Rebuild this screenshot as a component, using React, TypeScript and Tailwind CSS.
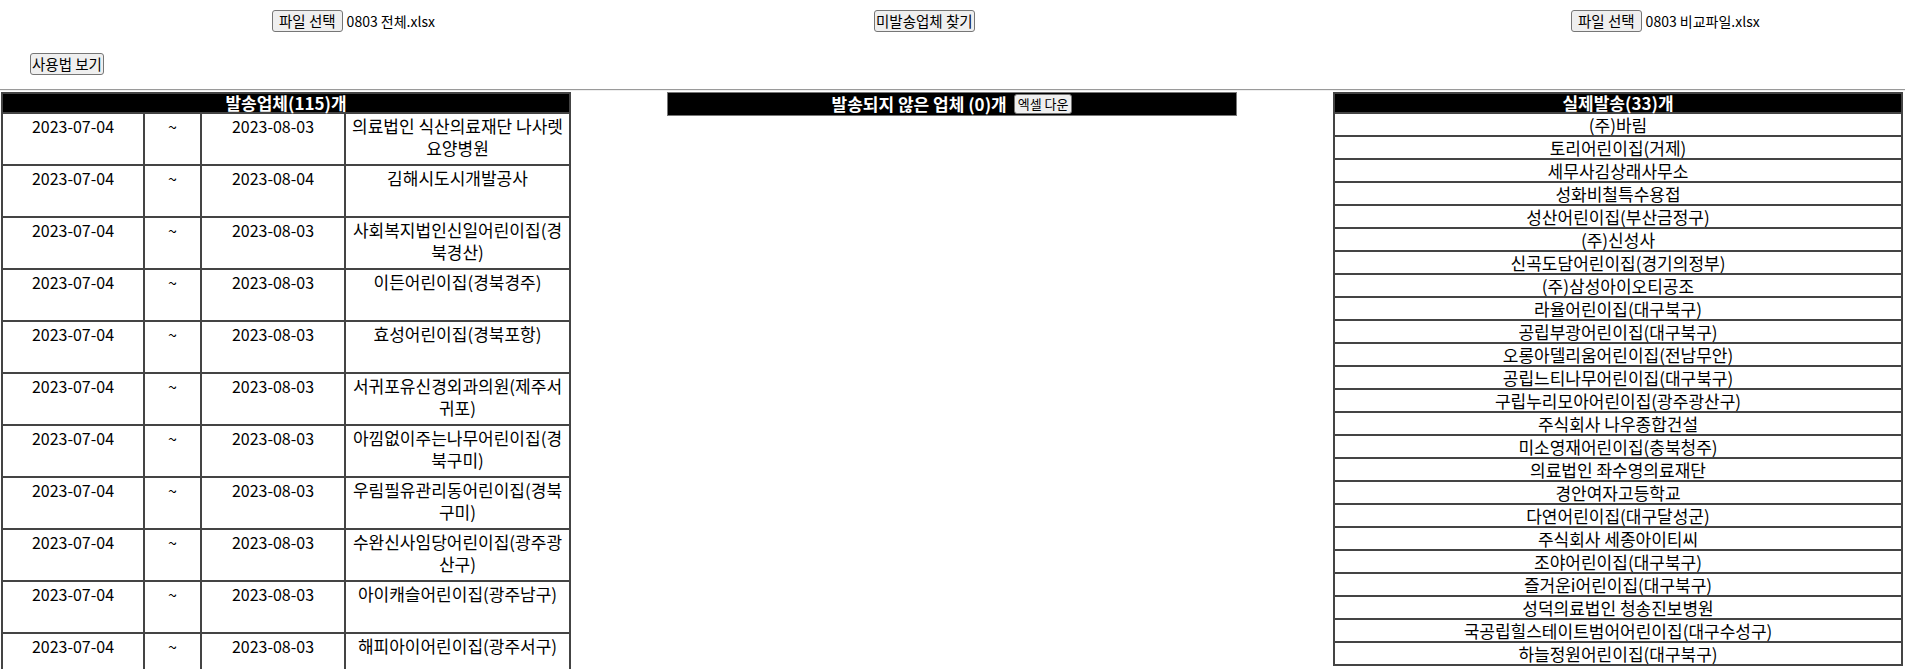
const sent = [
  { from: '2023-07-04', to: '2023-08-03', name: '의료법인 식산의료재단 나사렛 요양병원' },
  { from: '2023-07-04', to: '2023-08-04', name: '김해시도시개발공사' },
  { from: '2023-07-04', to: '2023-08-03', name: '사회복지법인신일어린이집(경북경산)' },
  { from: '2023-07-04', to: '2023-08-03', name: '이든어린이집(경북경주)' },
  { from: '2023-07-04', to: '2023-08-03', name: '효성어린이집(경북포항)' },
  { from: '2023-07-04', to: '2023-08-03', name: '서귀포유신경외과의원(제주서귀포)' },
  { from: '2023-07-04', to: '2023-08-03', name: '아낌없이주는나무어린이집(경북구미)' },
  { from: '2023-07-04', to: '2023-08-03', name: '우림필유관리동어린이집(경북구미)' },
  { from: '2023-07-04', to: '2023-08-03', name: '수완신사임당어린이집(광주광산구)' },
  { from: '2023-07-04', to: '2023-08-03', name: '아이캐슬어린이집(광주남구)' },
  { from: '2023-07-04', to: '2023-08-03', name: '해피아이어린이집(광주서구)' },
];

const actual = [
  '(주)바림',
  '토리어린이집(거제)',
  '세무사김상래사무소',
  '성화비철특수용접',
  '성산어린이집(부산금정구)',
  '(주)신성사',
  '신곡도담어린이집(경기의정부)',
  '(주)삼성아이오티공조',
  '라율어린이집(대구북구)',
  '공립부광어린이집(대구북구)',
  '오롱아델리움어린이집(전남무안)',
  '공립느티나무어린이집(대구북구)',
  '구립누리모아어린이집(광주광산구)',
  '주식회사 나우종합건설',
  '미소영재어린이집(충북청주)',
  '의료법인 좌수영의료재단',
  '경안여자고등학교',
  '다연어린이집(대구달성군)',
  '주식회사 세종아이티씨',
  '조야어린이집(대구북구)',
  '즐거운i어린이집(대구북구)',
  '성덕의료법인 청송진보병원',
  '국공립힐스테이트범어어린이집(대구수성구)',
  '하늘정원어린이집(대구북구)',
];

const btn =
  'bg-[#efefef] border border-[#767676] rounded-[3px] text-[14.5px] leading-[18px] py-px text-black';

function FilePick({ file }: { file: string }) {
  return (
    <div className="flex items-center">
      <button className={`${btn} px-[6px]`}>파일 선택</button>
      <span className="ml-[4px] text-[14px] leading-[18px]">{file}</span>
    </div>
  );
}

function SentTable() {
  const cell = 'h-[52px] border-r-2 border-b-2 border-[#444] pt-px px-px text-center leading-[22px]';
  return (
    <div className="w-[570px]">
      <div className="h-[22px] bg-black border-2 border-[#444] text-white font-bold text-[17px] text-center leading-[18px]">
        발송업체(115)개
      </div>
      {sent.map((r, i) => (
        <div key={i} className="grid grid-cols-[144px_57px_144px_225px]">
          <div className={`${cell} border-l-2`}>{r.from}</div>
          <div className={cell}>~</div>
          <div className={cell}>{r.to}</div>
          <div className={`${cell} text-[17px]`}>{r.name}</div>
        </div>
      ))}
    </div>
  );
}

function ActualTable() {
  return (
    <div className="w-[570px]">
      <div className="h-[22px] bg-black border-2 border-[#444] text-white font-bold text-[17px] text-center leading-[18px]">
        실제발송(33)개
      </div>
      {actual.map((n, i) => (
        <div key={i} className="h-[23px] border-x-2 border-b-2 border-[#444] text-center text-[17px] leading-[21px]">
          {n}
        </div>
      ))}
    </div>
  );
}

export default function App() {
  return (
    <div className="min-h-screen bg-white text-black text-[16px] font-['Noto_Sans_CJK_SC','Noto_Sans_CJK_KR',sans-serif]">
      <div className="grid grid-cols-3 pt-[10px]">
        <div className="flex pl-[272px]">
          <FilePick file="0803 전체.xlsx" />
        </div>
        <div className="flex pl-[239px]">
          <button className={`${btn} px-px`}>미발송업체 찾기</button>
        </div>
        <div className="flex pl-[301px]">
          <FilePick file="0803 비교파일.xlsx" />
        </div>
      </div>

      <div className="flex mt-[21px] pl-[30px]">
        <button className={`${btn} px-px`}>사용법 보기</button>
      </div>

      <div className="mt-[14px] border-t border-b border-t-[#9a9a9a] border-b-[#eeeeee]" />

      <div className="mt-px flex items-start justify-between pl-px pr-[2px]">
        <SentTable />
        <div className="w-[570px] h-[24px] bg-black border border-[#777] flex items-center justify-center gap-[7px]">
          <span className="text-white font-bold text-[17px] leading-[20px]">발송되지 않은 업체 (0)개</span>
          <button className="bg-[#efefef] border border-[#767676] rounded-[3px] text-[13px] leading-[16px] px-[3px] py-px text-black">
            엑셀 다운
          </button>
        </div>
        <ActualTable />
      </div>
    </div>
  );
}
